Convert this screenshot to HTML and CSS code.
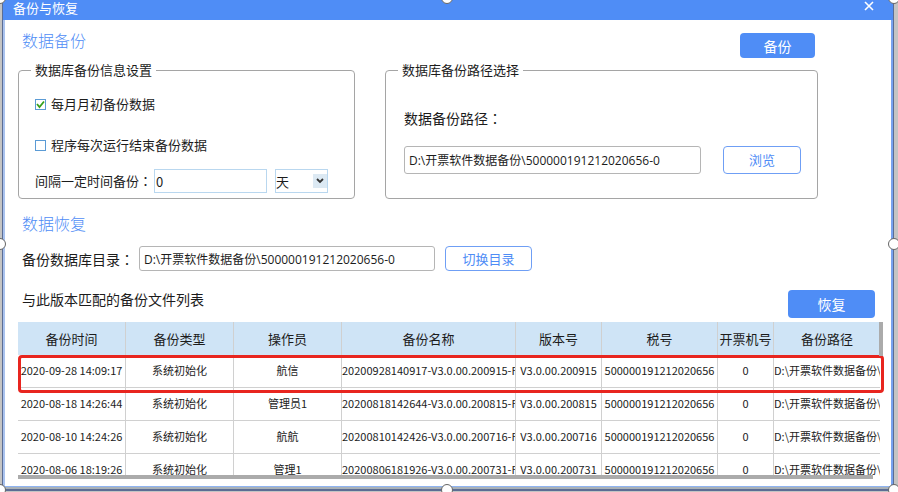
FILE: index.html
```
<!DOCTYPE html>
<html lang="zh-CN">
<head>
  <meta charset="UTF-8">
  <meta name="viewport" content="width=device-width, initial-scale=1.0">
  <title>备份与恢复</title>
  <link rel="stylesheet" href="styles.css">
</head>
<body>

  <div class="window">
    <div class="header">
      <div class="window-title">备份与恢复</div>
      <button class="close-btn" aria-label="关闭">
        <svg width="10" height="10" viewBox="0 0 10 10"><path d="M1 1l8 8M9 1l-8 8" stroke="#fff" stroke-width="1.6"/></svg>
      </button>
    </div>

    <div class="content">
      <!-- Backup -->
      <div class="title-row">
        <h2>数据备份</h2>
        <button class="button primary">备份</button>
      </div>

      <div class="groups">
        <fieldset class="group settings">
          <legend>数据库备份信息设置</legend>
          <label class="check"><input type="checkbox" checked>每月月初备份数据</label>
          <label class="check"><input type="checkbox">程序每次运行结束备份数据</label>
          <div class="interval">
            <label for="interval">间隔一定时间备份<span class="colon" lang="zh-TW">：</span></label>
            <input type="text" id="interval" class="interval-input" value="0">
            <select class="unit" aria-label="时间单位">
              <option>天</option>
              <option>月</option>
            </select>
          </div>
        </fieldset>

        <fieldset class="group path">
          <legend>数据库备份路径选择</legend>
          <label class="big-label" for="backupPath">数据备份路径<span class="colon" lang="zh-TW">：</span></label>
          <div class="path-row">
            <input type="text" id="backupPath" class="path-input" value="D:\开票软件数据备份\500000191212020656-0">
            <button class="button outline browse">浏览</button>
          </div>
        </fieldset>
      </div>

      <!-- Restore -->
      <h2 class="restore-title">数据恢复</h2>
      <div class="folder-row">
        <label class="big-label" for="folder">备份数据库目录<span class="colon" lang="zh-TW">：</span></label>
        <input type="text" id="folder" class="path-input folder-input" value="D:\开票软件数据备份\500000191212020656-0">
        <button class="button outline">切换目录</button>
      </div>

      <div class="list-row">
        <div class="big-label">与此版本匹配的备份文件列表</div>
        <button class="button primary restore">恢复</button>
      </div>

      <div class="list">
        <div class="table-clip">
          <table>
            <colgroup>
              <col class="c-time"><col class="c-type"><col class="c-user"><col class="c-name">
              <col class="c-version"><col class="c-tax"><col class="c-machine"><col class="c-path">
            </colgroup>
            <thead>
              <tr>
                <th>备份时间</th><th>备份类型</th><th>操作员</th><th>备份名称</th>
                <th>版本号</th><th>税号</th><th>开票机号</th><th>备份路径</th>
              </tr>
            </thead>
            <tbody>
              <tr>
                <td>2020-09-28 14:09:17</td><td>系统初始化</td><td>航信</td><td class="left">20200928140917-V3.0.00.200915-F</td>
                <td>V3.0.00.200915</td><td>500000191212020656</td><td>0</td><td class="left">D:\开票软件数据备份\</td>
              </tr>
              <tr>
                <td>2020-08-18 14:26:44</td><td>系统初始化</td><td>管理员1</td><td class="left">20200818142644-V3.0.00.200815-F</td>
                <td>V3.0.00.200815</td><td>500000191212020656</td><td>0</td><td class="left">D:\开票软件数据备份\</td>
              </tr>
              <tr>
                <td>2020-08-10 14:24:26</td><td>系统初始化</td><td>航航</td><td class="left">20200810142426-V3.0.00.200716-F</td>
                <td>V3.0.00.200716</td><td>500000191212020656</td><td>0</td><td class="left">D:\开票软件数据备份\</td>
              </tr>
              <tr>
                <td>2020-08-06 18:19:26</td><td>系统初始化</td><td>管理1</td><td class="left">20200806181926-V3.0.00.200731-F</td>
                <td>V3.0.00.200731</td><td>500000191212020656</td><td>0</td><td class="left">D:\开票软件数据备份\</td>
              </tr>
            </tbody>
          </table>
        </div>
        <div class="highlight"></div>
        <div class="scroll-v"></div>
        <div class="scroll-h"></div>
      </div>
    </div>
  </div>

  <!-- Selection handles -->
  <i class="handle top left-side"></i>
  <i class="handle top middle"></i>
  <i class="handle top right-side"></i>
  <i class="handle center left-side"></i>
  <i class="handle center right-side"></i>
  <i class="handle bottom left-side"></i>
  <i class="handle bottom middle"></i>
  <i class="handle bottom right-side"></i>

</body>
</html>
```
FILE: styles.css
```
* {
  box-sizing: border-box;
}

html, body {
  margin: 0;
  height: 100%;
}

body {
  position: relative;
  overflow: hidden;
  padding: 0 4px 1px 2px;
  background: #c4c4c4;
  color: #1c1c1c;
  font-family: "Noto Sans CJK SC", sans-serif;
  font-size: 13px;
  line-height: 20px;
}

button, input, select {
  font-family: inherit;
  font-size: 13px;
  color: inherit;
  margin: 0;
}

button {
  cursor: pointer;
}

.window {
  height: 100%;
  display: flex;
  flex-direction: column;
  background: #fff;
  border: solid #5b6d94;
  border-width: 0 1px 2px;
  box-shadow: inset 2px 0 #a9c2ee, inset -2px 0 #78a3f0, inset 0 -2px #a9b1b8, inset 0 -3px #8fb4f2;
}

.header {
  height: 20px;
  flex: none;
  padding: 0 19px 0 10px;
  display: flex;
  align-items: flex-start;
  justify-content: space-between;
  background: #4f8df6;
  color: #fff;
}

.window-title {
  line-height: 16px;
}

.close-btn {
  padding: 0;
  border: none;
  background: none;
  line-height: 12px;
}

.content {
  flex: 1;
  min-height: 0;
  display: flex;
  flex-direction: column;
  padding: 10px 10px 10px 15px;
}

h2 {
  margin: 0;
  padding-left: 4px;
  font-size: 16px;
  line-height: 20px;
  font-weight: 300;
  color: #4f8df6;
}

.title-row {
  display: flex;
  justify-content: space-between;
  height: 30px;
  padding-right: 68px;
}

.button {
  border-radius: 4px;
  padding: 0;
  line-height: 20px;
}

.primary {
  width: 75px;
  height: 25px;
  margin-top: 3px;
  border: none;
  background: #4f8df6;
  color: #fff;
  font-size: 14px;
}

.outline {
  width: 87px;
  height: 25px;
  border: 1px solid #6f9ff5;
  background: #fff;
  color: #4f8df6;
}

/* Group boxes */
.groups {
  display: grid;
  grid-template-columns: 337fr 433fr;
  gap: 30px;
  padding-right: 65px;
}

.group {
  margin: 0;
  min-width: 0;
  height: 139px;
  border: 1px solid #a5a5a5;
  border-radius: 4px;
  padding: 0 16px;
}

.path {
  padding-left: 18px;
}

legend {
  padding: 0 4px;
  margin-left: -4px;
}

.path legend {
  margin-left: -6px;
}

.colon {
  font-family: "Noto Sans CJK TC", sans-serif;
}

.check {
  display: flex;
  align-items: center;
  gap: 5px;
  height: 20px;
  margin: 14px 0 21px;
}

.check input {
  appearance: none;
  width: 11px;
  height: 11px;
  border: 1px solid #5b9bd5;
  background: #fff;
}

.check input:checked {
  background: #fff url("data:image/svg+xml,%3Csvg xmlns='http://www.w3.org/2000/svg' viewBox='0 0 9 9'%3E%3Cpath d='M1 4l2.500 3L8 1.500' fill='none' stroke='%2336a01c' stroke-width='1.800'/%3E%3C/svg%3E");
}

.interval {
  display: flex;
  align-items: center;
  margin-top: -7px;
}

.interval-input, .unit {
  height: 24px;
  border: 1px solid #b9d7ef;
  background: #fff;
  padding: 0 1px;
}

.interval-input {
  flex: 1;
  min-width: 0;
  max-width: 113px;
  margin-left: 2px;
}

.unit {
  width: 53px;
  margin-left: 8px;
  padding: 0;
  appearance: none;
  border-radius: 0;
  background: url("data:image/svg+xml,%3Csvg xmlns='http://www.w3.org/2000/svg' viewBox='0 0 14 14'%3E%3Cpath fill='%23dce9f3' d='M0 0h14v14H0z'/%3E%3Cpath d='M4 5l3 3 3-3' fill='none' stroke='%23333' stroke-width='1.800'/%3E%3C/svg%3E") no-repeat right center / 14px 14px;
}

.big-label {
  font-size: 14px;
}

.path .big-label {
  display: block;
  margin: 28px 0 18px;
}

.path-row {
  display: flex;
  justify-content: space-between;
  gap: 22px;
}

.path-input {
  flex: 1;
  min-width: 0;
  height: 28px;
  padding: 0 4px;
  border: 1px solid #b5b5b5;
  border-radius: 3px;
  background: #fff;
  font-family: "Open Sans", "Noto Sans CJK SC", sans-serif;
  font-size: 12px;
}

.browse {
  width: 78px;
  height: 28px;
}

/* Restore section */
.restore-title {
  margin-top: 14px;
}

.folder-row {
  display: flex;
  align-items: center;
  margin-top: 13px;
  padding-left: 4px;
}

.folder-input {
  flex: 0 1 296px;
  height: 25px;
  margin: 0 10px 0 5px;
}

.list-row {
  display: flex;
  justify-content: space-between;
  height: 51px;
  padding: 18px 8px 0 4px;
}

.restore {
  width: 87px;
  height: 28px;
  margin-top: 1px;
}

.list {
  position: relative;
  flex: 1;
  min-height: 0;
}

.table-clip {
  height: 100%;
  margin-right: 3px;
  overflow: hidden;
}

table {
  width: 100%;
  table-layout: fixed;
  border-spacing: 0;
}

th, td {
  padding: 0;
  overflow: hidden;
  white-space: nowrap;
  text-align: center;
  border-right: 1px solid #d0d0d0;
}

th:last-child, td:last-child {
  border-right: none;
}

th {
  height: 33px;
  background: #cfe4f6;
  font-weight: 400;
}

td {
  height: 33px;
  padding-bottom: 2px;
  border-bottom: 1px solid #d0d0d0;
  font-size: 11px;
}

td.left {
  text-align: left;
}

.c-time, .c-type, .c-user {
  width: 108px;
}

.c-name {
  width: 174px;
}

.c-version {
  width: 86px;
}

.c-tax {
  width: 116px;
}

.c-machine {
  width: 56px;
}

.highlight {
  position: absolute;
  top: 33px;
  left: 0;
  right: -1px;
  height: 38px;
  border: 3px solid #e8251f;
  border-radius: 4px;
}

.scroll-v, .scroll-h {
  position: absolute;
  background: #ababab;
}

.scroll-v {
  top: 0;
  right: 0;
  width: 4px;
  height: 34px;
}

.scroll-h {
  left: 0;
  right: 10px;
  bottom: 0;
  height: 4px;
}

/* Handles on the edges of the window */
.handle {
  position: absolute;
  width: 12px;
  height: 12px;
  border: 1px solid #666;
  border-radius: 50%;
  background: #fff;
}

.top {
  top: -8px;
}

.center {
  top: calc(50% - 8px);
}

.bottom {
  bottom: -4px;
}

.left-side {
  left: -6px;
}

.middle {
  left: calc(50% - 8px);
}

.right-side {
  right: -2px;
}
```
